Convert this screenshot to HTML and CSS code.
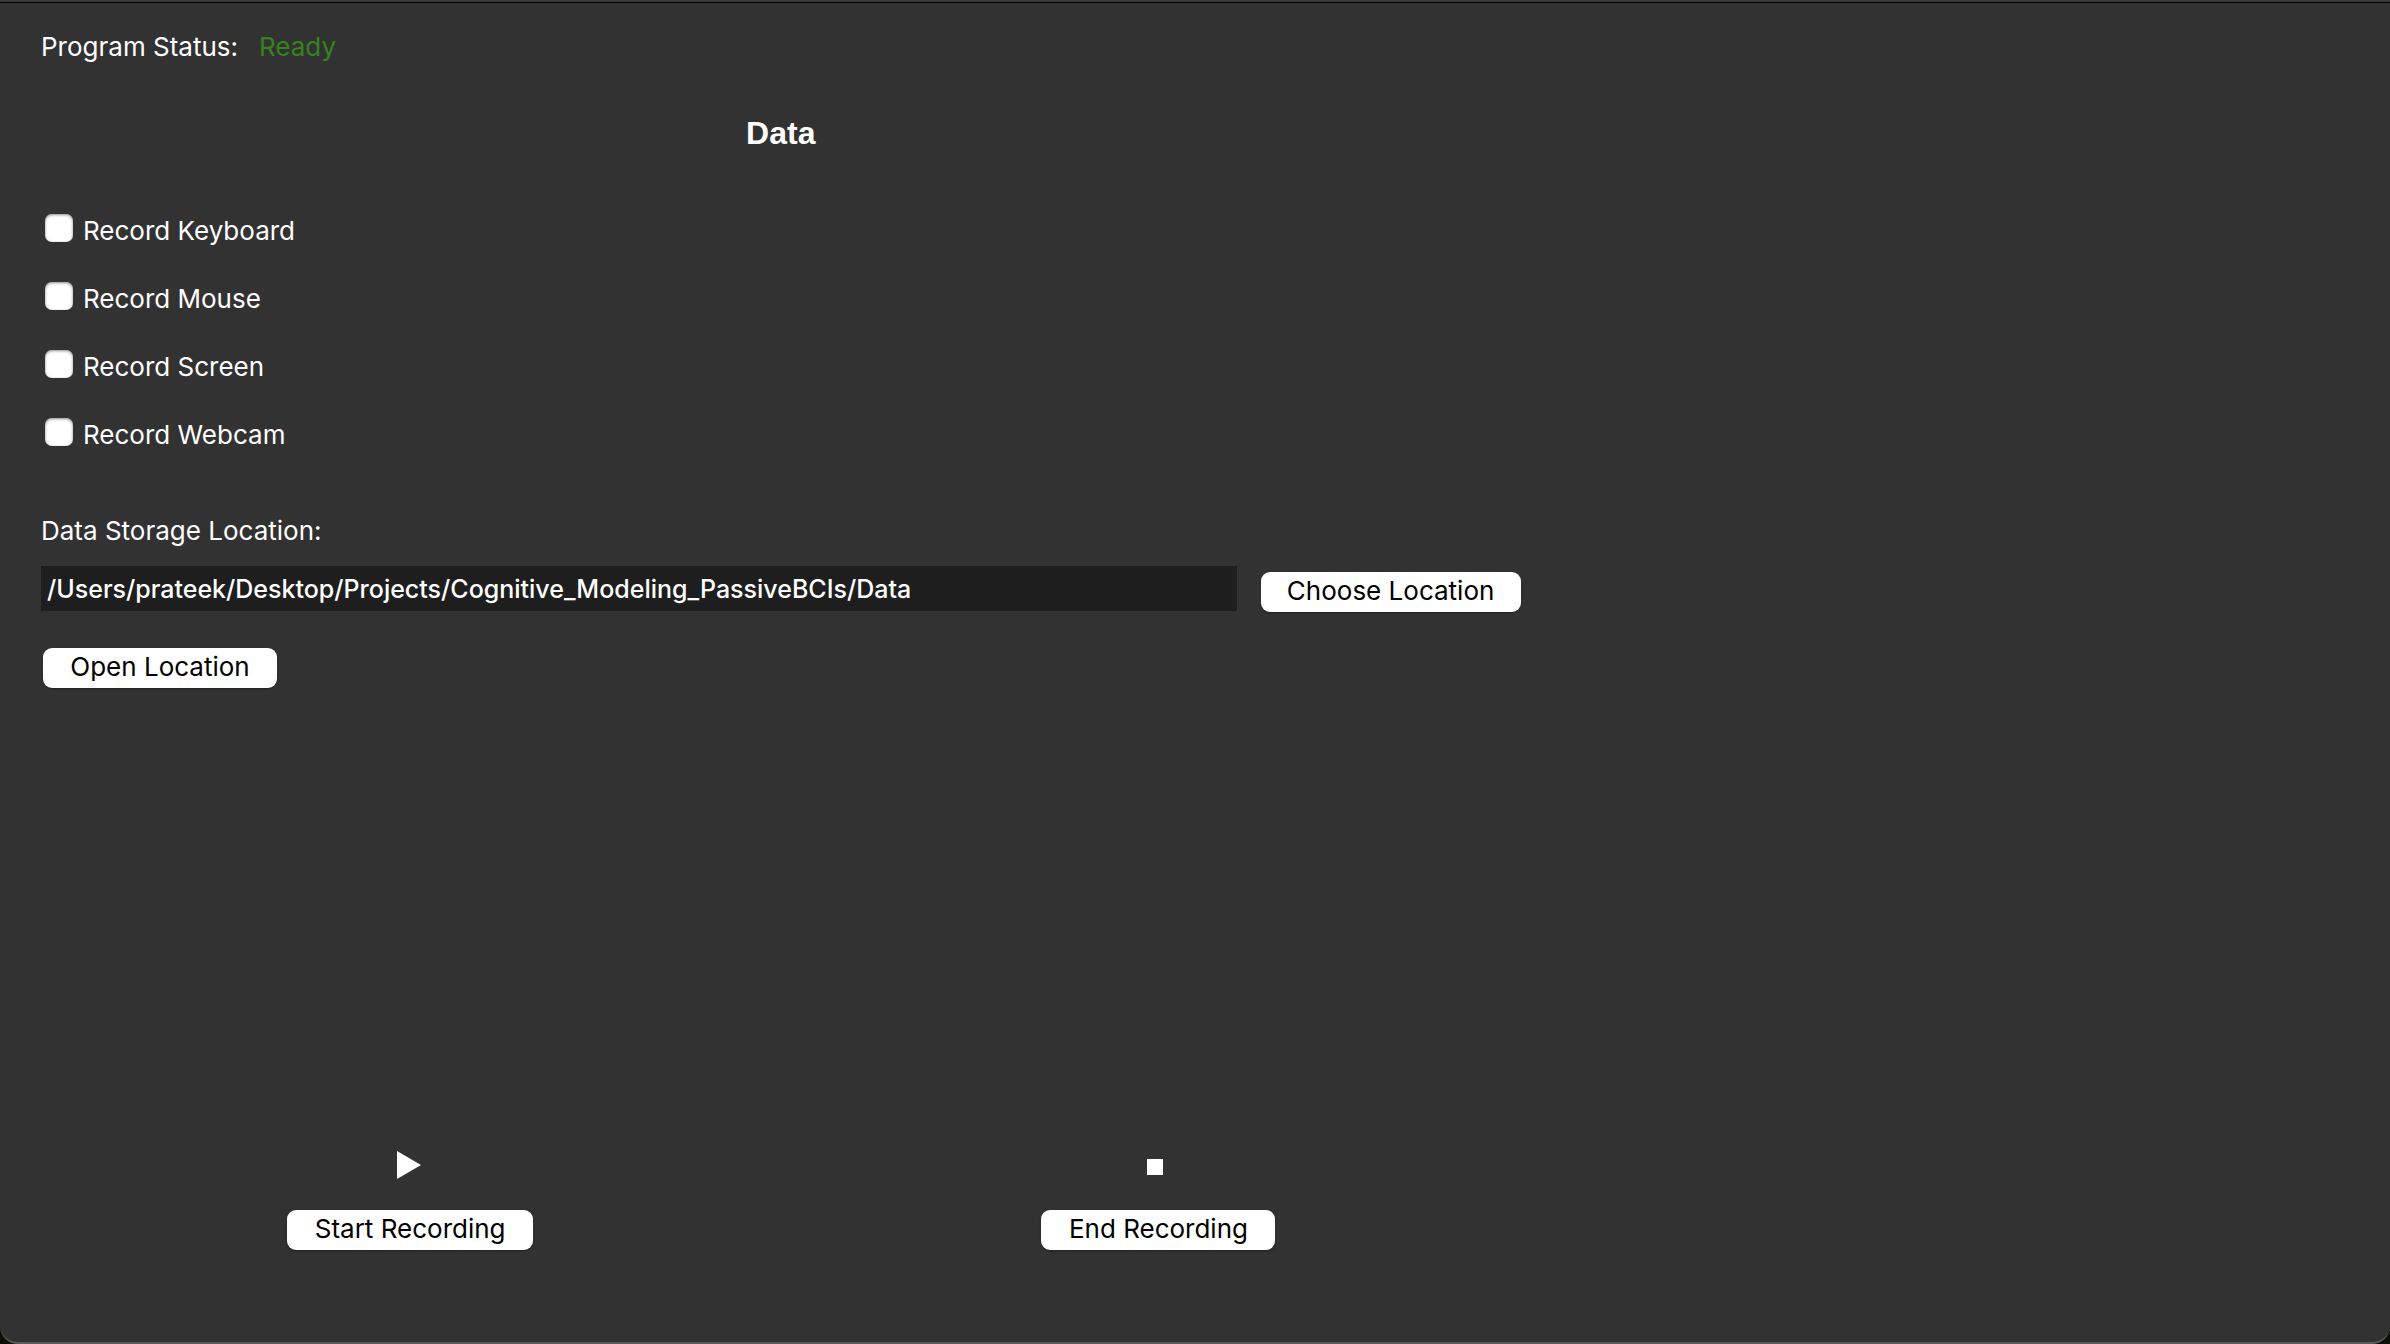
FILE: index.html
```html
<!DOCTYPE html>
<html lang="en">
<head>
<meta charset="utf-8">
<title>Recorder</title>
<link rel="stylesheet" href="styles.css">
</head>
<body>
<div class="window">
  <main class="panel">
    <p class="status"><span>Program Status:</span><span class="status-value">Ready</span></p>
    <h1 class="title">Data</h1>
    <div class="options">
      <label class="option"><input class="check" type="checkbox"><span>Record Keyboard</span></label>
      <label class="option"><input class="check" type="checkbox"><span>Record Mouse</span></label>
      <label class="option"><input class="check" type="checkbox"><span>Record Screen</span></label>
      <label class="option"><input class="check" type="checkbox"><span>Record Webcam</span></label>
    </div>
    <label class="location-label" for="location">Data Storage Location:</label>
    <div class="location-row">
      <input class="location" id="location" type="text" value="/Users/prateek/Desktop/Projects/Cognitive_Modeling_PassiveBCIs/Data">
      <button class="button button-choose" type="button">Choose Location</button>
    </div>
    <button class="button button-open" type="button">Open Location</button>
    <div class="transport">
      <div class="transport-item">
        <svg class="icon" viewBox="0 0 28 28" aria-hidden="true"><path d="M1 0L25 14L1 28Z"/></svg>
        <button class="button button-start" type="button">Start Recording</button>
      </div>
      <div class="transport-item">
        <svg class="icon" viewBox="0 0 28 28" aria-hidden="true"><path d="M3 8H19V24H3Z"/></svg>
        <button class="button button-end" type="button">End Recording</button>
      </div>
    </div>
  </main>
</div>
</body>
</html>
```
FILE: styles.css
```css
* {
  box-sizing: border-box;
}

body {
  margin: 0;
  background: #0c0e08;
  color: #fff;
  font: 26px/32px Inter, "Liberation Sans", sans-serif;
}

.window {
  display: flex;
  min-height: 100vh;
  border-top: 2px solid #3b3b3b;
  border-bottom: 2px solid #5a5a5a;
  border-radius: 0 0 18px 18px;
  background: #323232;
  box-shadow: inset 0 1px #000;
}

.panel {
  display: flex;
  flex-direction: column;
  align-items: flex-start;
  width: 64%;
  padding: 29px 9px 92px 41px;
}

.status {
  display: flex;
  gap: 21px;
  margin: 0;
}

.status-value {
  color: #37811f;
}

.title {
  align-self: stretch;
  margin: 50px 0 0;
  font: bold 32px/40px "Liberation Sans", sans-serif;
  text-align: center;
}

.options {
  display: grid;
  gap: 34px;
  margin: 61px 0 0 4px;
}

.option {
  display: flex;
  gap: 10px;
  line-height: 34px;
}

.check {
  appearance: none;
  width: 28px;
  height: 28px;
  margin: 0;
  border-radius: 7px;
  background: #fff;
  box-shadow: inset 0 1px 3px #8c8c8c;
}

.location-label {
  margin-top: 63px;
}

.location-row {
  display: flex;
  align-self: stretch;
  align-items: flex-start;
  gap: 24px;
  margin-top: 19px;
}

.location {
  flex: 1;
  min-width: 0;
  height: 45px;
  padding: 0 6px;
  border: 0;
  background: #1e1e1e;
  color: inherit;
  font: inherit;
  font-size: 25px;
  font-weight: 500;
}

.button {
  height: 40px;
  padding: 0 0 2px;
  border: 0;
  border-radius: 9px;
  background: #fff;
  box-shadow: 0 1px 2px #222;
  color: #000;
  font: inherit;
}

.button-choose {
  width: 260px;
  margin-top: 6px;
}

.button-open {
  width: 234px;
  margin: 36px 0 0 2px;
}

.button-start {
  width: 246px;
}

.button-end {
  width: 234px;
}

.transport {
  display: grid;
  grid-template-columns: 1fr 1fr;
  gap: 24px;
  align-self: stretch;
  margin-top: auto;
  padding-left: 7px;
}

.transport-item {
  display: grid;
  justify-items: center;
  gap: 31px;
}

.icon {
  width: 28px;
  height: 28px;
  fill: #fff;
}
```
